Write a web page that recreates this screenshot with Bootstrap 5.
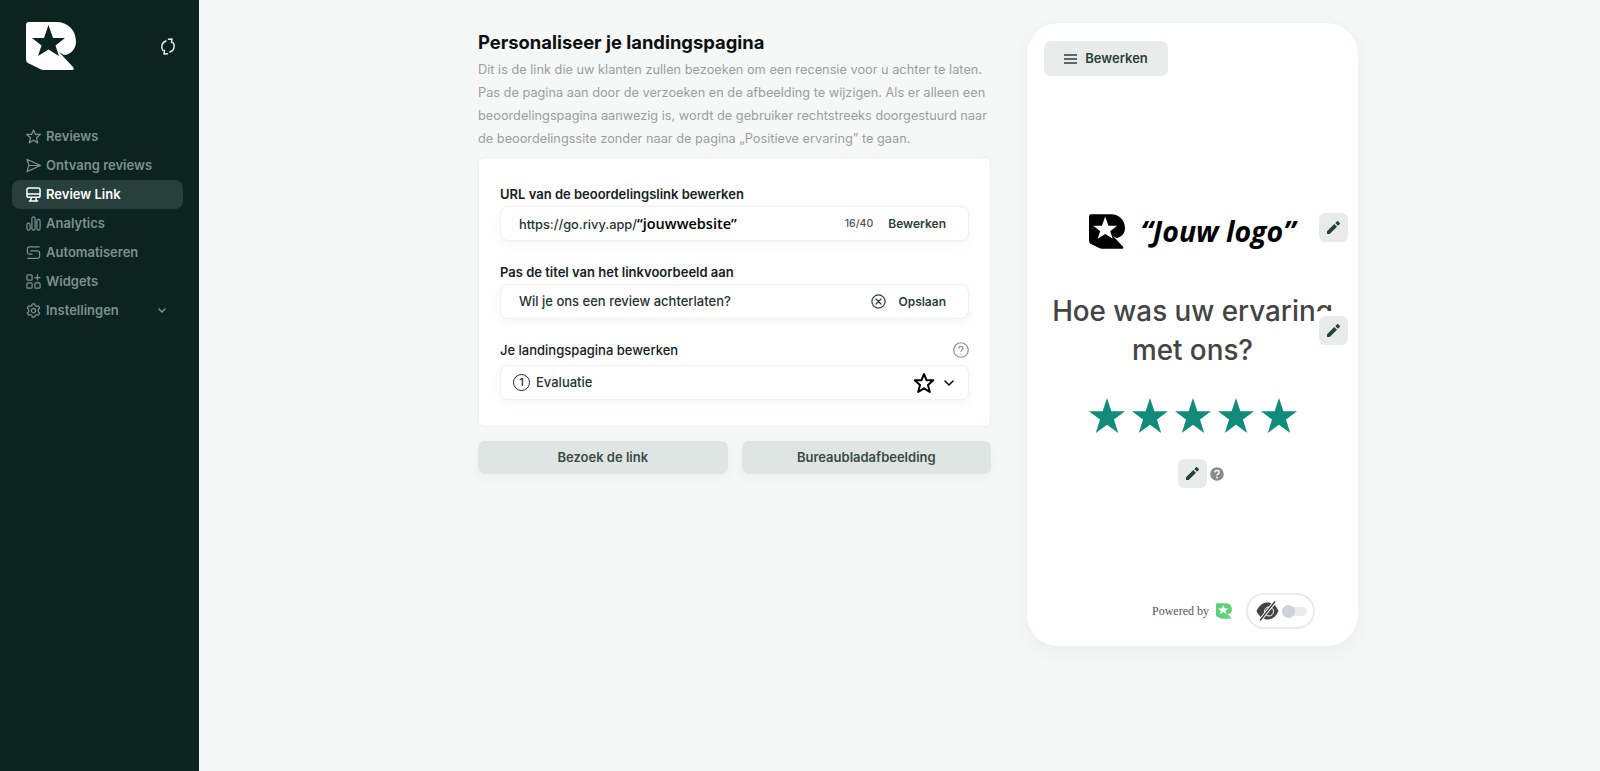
<!DOCTYPE html>
<html lang="nl">
<head>
    <meta charset="UTF-8" />
    <meta name="viewport" content="width=device-width, initial-scale=1.0"/>
    <title>Review Link</title>
    <link href="https://cdn.jsdelivr.net/npm/bootstrap@5.3.0/dist/css/bootstrap.min.css" rel="stylesheet"/>
    <style>
        body {
            background: #f6f8f7;
            font-family: "Inter", "Noto Sans", sans-serif;
            height: 771px;
            overflow: hidden;
        }

        .side-bar {
            width: 199px;
            height: 771px;
            background: #0b2420;
            flex-shrink: 0;
        }

        .side-top {
            height: 122px;
            padding: 22px 23px 0 26px;
        }

        .side-link {
            height: 29px;
            margin: 0 16px 0 12px;
            padding: 0 14px;
            border-radius: 8px;
            color: #7d908c;
            font-size: 13px;
            font-weight: 600;
            text-decoration: none;
        }

        .side-link.is-active {
            background: #27403b;
            color: #fff;
        }

        .side-link svg {
            width: 15px;
            height: 15px;
            margin-right: 5px;
            flex-shrink: 0;
        }

        .left-col {
            width: 513px;
            margin-left: 279px;
            padding-top: 31px;
        }

        .page-title {
            font-size: 18.4px;
            line-height: 22px;
            font-weight: 700;
            color: #0c0f0f;
            margin: 0 0 5px;
        }

        .page-intro {
            font-size: 12.75px;
            line-height: 23px;
            color: #9a9f9d;
            margin: 0 0 7px;
            white-space: nowrap;
        }

        .edit-card {
            background: #fff;
            border: 1px solid #eef0ef;
            border-radius: 6px;
            padding: 27px 21px 26px;
            height: 270px;
        }

        .field-label {
            font-size: 13px;
            line-height: 18px;
            font-weight: 600;
            color: #15201e;
            margin-bottom: 3px;
        }

        .field-label-last {
            font-weight: 500;
            margin-bottom: 6px;
        }

        .field-box {
            height: 35px;
            background: #fff;
            border: 1px solid #eff1f0;
            border-radius: 8px;
            box-shadow: 0 3px 10px rgba(20, 50, 45, .05);
            padding: 0 22px 0 18px;
            margin-bottom: 22px;
            font-size: 13px;
            font-weight: 500;
            color: #26322f;
        }

        .field-box-step {
            padding: 0 13px 0 12px;
            margin-bottom: 0;
        }

        .site-name {
            font-family: "Open Sans", sans-serif;
            font-size: 14.5px;
            font-weight: 600;
            color: #000;
        }

        .url-base {
            font-size: 12.8px;
        }

        .count-text {
            font-size: 10.5px;
            color: #4c5654;
            margin-right: 15px;
        }

        .box-action {
            font-size: 12px;
            font-weight: 600;
            color: #2b3f3b;
        }

        .step-num {
            width: 17px;
            height: 17px;
            border: 1.3px solid #222;
            border-radius: 50%;
            font-size: 11px;
            margin-right: 6px;
        }

        .btn-line {
            margin-top: 14px;
            gap: 14px;
        }

        .soft-btn {
            width: 50%;
            height: 33px;
            background: #dfe5e3;
            border: 0;
            border-radius: 7px;
            color: #3a4b48;
            font-size: 13px;
            font-weight: 600;
            box-shadow: 0 4px 10px rgba(20, 50, 45, .04);
        }

        .phone-box {
            position: relative;
            width: 333px;
            height: 625px;
            margin: 22px 0 0 35px;
            background: #fff;
            border: 1px solid #f0f2f1;
            border-radius: 32px;
            box-shadow: 0 6px 18px rgba(20, 50, 45, .05);
            padding: 18px 17px 17px;
        }

        .menu-btn {
            width: 124px;
            height: 35px;
            background: #e8ebea;
            border-radius: 7px;
            font-size: 13px;
            font-weight: 600;
            color: #2b3f3b;
        }

        .logo-line {
            margin-top: 137px;
            height: 37px;
            gap: 15px;
        }

        .logo-text {
            font-family: "Open Sans", sans-serif;
            font-size: 28.5px;
            line-height: 37px;
            font-weight: 700;
            font-style: italic;
            color: #000;
        }

        .phone-title {
            margin: 42px 0 0;
            font-size: 27.8px;
            line-height: 39px;
            font-weight: 500;
            color: #444;
            text-align: center;
        }

        .star-line {
            margin-top: 28px;
            gap: 7px;
        }

        .pen-btn {
            width: 29px;
            height: 29px;
            background: #e8ebea;
            border-radius: 6px;
        }

        .pen-float {
            position: absolute;
            right: 10px;
            box-shadow: -5px -5px 0 #fff;
        }

        .pen-top {
            top: 190px;
        }

        .pen-mid {
            top: 293px;
        }

        .pen-wrap {
            position: relative;
            margin-top: 26px;
        }

        .help-dot {
            position: absolute;
            left: 32px;
            top: 8px;
        }

        .powered-line {
            position: absolute;
            left: 0;
            right: 43px;
            bottom: 17px;
        }

        .powered-text {
            font-family: "Liberation Serif", serif;
            font-size: 12px;
            color: #555;
            margin-right: 7px;
        }

        .eye-pill {
            width: 69px;
            height: 36px;
            margin-left: 14px;
            border: 2px solid #e9ecec;
            border-radius: 18px;
            padding-left: 8px;
        }

        .mini-track {
            position: relative;
            width: 25px;
            height: 9px;
            margin-left: 3px;
            background: #e9ecee;
            border-radius: 5px;
        }

        .mini-knob {
            position: absolute;
            left: 0;
            top: -2px;
            width: 13px;
            height: 13px;
            background: #ced4da;
            border-radius: 50%;
        }
    </style>
</head>
<body>
<div class="d-flex">
    <nav class="side-bar">
        <div class="side-top d-flex justify-content-between">
            <svg width="50" height="48" viewBox="0 0 50 48">
                <path fill="#fff" d="M3 0H30C42 0 50 8 50 20C50 27 44 33 38 33L33 30L47 45Q49 48 46 48H18Q16 48 14 47L2 41Q0 40 0 37V3Q0 0 3 0Z"/>
                <path fill="#0b2420" d="M22.500 3L27 16H39L29.500 23.500L33 34L22.500 27.500L12 34L15.500 23.500L6 16H18Z"/>
            </svg>
            <svg class="mt-3" width="16" height="17" viewBox="0 0 16 17" fill="none" stroke="#e6ebe9" stroke-width="1.500" stroke-linecap="round" stroke-linejoin="round">
                <path d="M3 12.500C.8 9.500 1.500 4.500 6 3M13 4.500C15.200 7.500 14.500 12.500 10 14"/>
                <path d="M8.500 1.200L12 1L11.500 4.600M7.500 15.800L4 16L4.500 12.400"/>
            </svg>
        </div>
        <a class="side-link d-flex align-items-center" href="#">
            <svg viewBox="0 0 16 16" fill="none" stroke="currentColor" stroke-width="1.300" stroke-linejoin="round"><path d="M8 1L10.100 5.800H15.300L11.200 9.300L12.500 14.800L8 11.900L3.500 14.800L4.800 9.300L.7 5.800H5.900Z"/></svg>
            <span>Reviews</span>
        </a>
        <a class="side-link d-flex align-items-center" href="#">
            <svg viewBox="0 0 16 16" fill="none" stroke="currentColor" stroke-width="1.300" stroke-linejoin="round"><path d="M1 1.500L15.500 8L1 14.500L3.200 8ZM3.200 8H15.500"/></svg>
            <span>Ontvang reviews</span>
        </a>
        <a class="side-link is-active d-flex align-items-center" href="#">
            <svg viewBox="0 0 16 16" fill="none" stroke="currentColor" stroke-width="1.600" stroke-linejoin="round"><rect x="1" y="1" width="14" height="10" rx="2"/><path d="M1 7.500H15M5.500 11L5 14.800M10.500 11L11 14.800M3 14.800H13"/></svg>
            <span>Review Link</span>
        </a>
        <a class="side-link d-flex align-items-center" href="#">
            <svg viewBox="0 0 16 16" fill="none" stroke="currentColor" stroke-width="1.300"><rect x="1" y="7.500" width="3.400" height="7.500" rx="1.700"/><rect x="6.300" y="1" width="3.400" height="14" rx="1.700"/><rect x="11.600" y="3.500" width="3.400" height="11.500" rx="1.700"/></svg>
            <span>Analytics</span>
        </a>
        <a class="side-link d-flex align-items-center" href="#">
            <svg viewBox="0 0 16 16" fill="none" stroke="currentColor" stroke-width="1.300" stroke-linecap="round"><path d="M14 2H4Q1.500 2 1.500 4V7.500Q1.500 9.800 4 9.800H6.500M5 6.200H12Q14.500 6.200 14.500 8.500V12Q14.500 14.300 12 14.300H2"/></svg>
            <span>Automatiseren</span>
        </a>
        <a class="side-link d-flex align-items-center" href="#">
            <svg viewBox="0 0 16 16" fill="none" stroke="currentColor" stroke-width="1.300" stroke-linecap="round"><rect x="1" y="1" width="5.500" height="5.500" rx="1"/><rect x="1" y="9.500" width="5.500" height="5.500" rx="1"/><rect x="9.500" y="9.500" width="5.500" height="5.500" rx="1"/><path d="M12.200 1V6.500M9.500 3.800H15"/></svg>
            <span>Widgets</span>
        </a>
        <a class="side-link d-flex align-items-center" href="#">
            <svg viewBox="0 0 16 16" fill="none" stroke="currentColor" stroke-width="1.300" stroke-linejoin="round"><circle cx="8" cy="8" r="2.300"/><path d="M6.600 1H9.400L9.800 3L11.300 3.800L13.200 3L14.600 5.400L13.100 6.700V9.300L14.600 10.600L13.200 13L11.300 12.200L9.800 13L9.400 15H6.600L6.200 13L4.700 12.200L2.800 13L1.400 10.600L2.900 9.300V6.700L1.400 5.400L2.800 3L4.700 3.800L6.200 3Z"/></svg>
            <span class="flex-grow-1">Instellingen</span>
            <svg class="me-0" viewBox="0 0 15 15" fill="none" stroke="currentColor" stroke-width="1.500" stroke-linecap="round" stroke-linejoin="round"><path d="M5 6L8 9L11 6"/></svg>
        </a>
    </nav>

    <main class="d-flex align-items-start">
        <section class="left-col">
            <h1 class="page-title">Personaliseer je landingspagina</h1>
            <p class="page-intro">Dit is de link die uw klanten zullen bezoeken om een recensie voor u achter te laten.<br>Pas de pagina aan door de verzoeken en de afbeelding te wijzigen. Als er alleen een<br>beoordelingspagina aanwezig is, wordt de gebruiker rechtstreeks doorgestuurd naar<br>de beoordelingssite zonder naar de pagina „Positieve ervaring” te gaan.</p>

            <div class="edit-card">
                <div class="field-label">URL van de beoordelingslink bewerken</div>
                <div class="field-box d-flex align-items-center">
                    <span class="url-base">https://go.rivy.app/<span class="site-name">“jouwwebsite”</span></span>
                    <span class="count-text ms-auto">16/40</span>
                    <span class="box-action">Bewerken</span>
                </div>

                <div class="field-label">Pas de titel van het linkvoorbeeld aan</div>
                <div class="field-box d-flex align-items-center">
                    <span>Wil je ons een review achterlaten?</span>
                    <svg class="ms-auto me-2" width="15" height="15" viewBox="0 0 15 15" fill="none" stroke="#2b3f3b" stroke-width="1.200" stroke-linecap="round"><circle cx="7.500" cy="7.500" r="6.600"/><path d="M5 5L10 10M10 5L5 10"/></svg>
                    <span class="box-action ms-1">Opslaan</span>
                </div>

                <div class="field-label field-label-last d-flex justify-content-between align-items-center">
                    <span>Je landingspagina bewerken</span>
                    <svg width="16" height="16" viewBox="0 0 15 15" fill="none" stroke="#8c9190" stroke-width="1.100" stroke-linecap="round"><circle cx="7.500" cy="7.500" r="6.800"/><path d="M5.500 5.800C5.500 3.500 9.500 3.500 9.500 5.800C9.500 7.200 7.500 7.200 7.500 9"/><path d="M7.500 11V11.100"/></svg>
                </div>
                <div class="field-box field-box-step d-flex align-items-center">
                    <span class="step-num d-flex align-items-center justify-content-center">1</span>
                    <span>Evaluatie</span>
                    <svg class="ms-auto" width="22" height="22" viewBox="0 0 22 22" fill="none" stroke="#000" stroke-width="2" stroke-linejoin="round"><path d="M11 2L13.600 8.300H20.300L15 13L16.800 20L11 16.300L5.200 20L7 13L1.700 8.300H8.400Z"/></svg>
                    <svg class="ms-2" width="12" height="12" viewBox="0 0 12 12" fill="none" stroke="#111" stroke-width="1.600" stroke-linecap="round" stroke-linejoin="round"><path d="M2 4L6 8L10 4"/></svg>
                </div>
            </div>

            <div class="btn-line d-flex">
                <button class="soft-btn" type="button">Bezoek de link</button>
                <button class="soft-btn" type="button">Bureaubladafbeelding</button>
            </div>
        </section>

        <section class="phone-box d-flex flex-column align-items-stretch">
            <div class="menu-btn d-flex align-items-center justify-content-center gap-2">
                <svg width="13" height="10" viewBox="0 0 13 10" stroke="#2b3f3b" stroke-width="1.300"><path d="M0 1H13M0 5H13M0 9H13"/></svg>
                <span>Bewerken</span>
            </div>

            <div class="logo-line d-flex align-items-center justify-content-center">
                <svg width="36" height="35" viewBox="0 0 50 48">
                    <path fill="#000" d="M3 0H30C42 0 50 8 50 20C50 27 44 33 38 33L33 30L47 45Q49 48 46 48H18Q16 48 14 47L2 41Q0 40 0 37V3Q0 0 3 0Z"/>
                    <path fill="#fff" d="M22.500 3L27 16H39L29.500 23.500L33 34L22.500 27.500L12 34L15.500 23.500L6 16H18Z"/>
                </svg>
                <span class="logo-text">“Jouw logo”</span>
            </div>

            <h2 class="phone-title">Hoe was uw ervaring<br>met ons?</h2>

            <div class="star-line d-flex justify-content-center">
                <svg width="36" height="35" viewBox="0 0 36 35" fill="#118b7a"><path d="M18 0L22.400 13.300H36L25 21.500L29.200 35L18 26.700L6.800 35L11 21.500L0 13.300H13.600Z"/></svg>
                <svg width="36" height="35" viewBox="0 0 36 35" fill="#118b7a"><path d="M18 0L22.400 13.300H36L25 21.500L29.200 35L18 26.700L6.800 35L11 21.500L0 13.300H13.600Z"/></svg>
                <svg width="36" height="35" viewBox="0 0 36 35" fill="#118b7a"><path d="M18 0L22.400 13.300H36L25 21.500L29.200 35L18 26.700L6.800 35L11 21.500L0 13.300H13.600Z"/></svg>
                <svg width="36" height="35" viewBox="0 0 36 35" fill="#118b7a"><path d="M18 0L22.400 13.300H36L25 21.500L29.200 35L18 26.700L6.800 35L11 21.500L0 13.300H13.600Z"/></svg>
                <svg width="36" height="35" viewBox="0 0 36 35" fill="#118b7a"><path d="M18 0L22.400 13.300H36L25 21.500L29.200 35L18 26.700L6.800 35L11 21.500L0 13.300H13.600Z"/></svg>
            </div>

            <div class="pen-wrap align-self-center">
                <div class="pen-btn d-flex align-items-center justify-content-center">
                    <svg width="13" height="13" viewBox="0 0 13 13" fill="#24423c"><path d="M0 10.300V13H2.700L10 5.700L7.300 3ZM12.800 2.900C13.100 2.600 13.100 2.200 12.800 1.900L11.100 .2C10.800 -.1 10.400 -.1 10.100 .2L8.300 2L11 4.700Z"/></svg>
                </div>
                <svg class="help-dot" width="14" height="14" viewBox="0 0 14 14"><circle cx="7" cy="7" r="6.800" fill="#8a8a8a"/><path d="M4.800 5.400C4.800 2.900 9.200 2.900 9.200 5.400C9.200 6.900 7 6.800 7 8.400" fill="none" stroke="#fff" stroke-width="1.400"/><circle cx="7" cy="10.500" r=".9" fill="#fff"/></svg>
            </div>

            <div class="pen-btn pen-float pen-top d-flex align-items-center justify-content-center">
                <svg width="13" height="13" viewBox="0 0 13 13" fill="#24423c"><path d="M0 10.300V13H2.700L10 5.700L7.300 3ZM12.800 2.900C13.100 2.600 13.100 2.200 12.800 1.900L11.100 .2C10.800 -.1 10.400 -.1 10.100 .2L8.300 2L11 4.700Z"/></svg>
            </div>
            <div class="pen-btn pen-float pen-mid d-flex align-items-center justify-content-center">
                <svg width="13" height="13" viewBox="0 0 13 13" fill="#24423c"><path d="M0 10.300V13H2.700L10 5.700L7.300 3ZM12.800 2.900C13.100 2.600 13.100 2.200 12.800 1.900L11.100 .2C10.800 -.1 10.400 -.1 10.100 .2L8.300 2L11 4.700Z"/></svg>
            </div>

            <div class="powered-line d-flex align-items-center justify-content-end">
                <span class="powered-text">Powered by</span>
                <svg width="16" height="16" viewBox="0 0 50 48">
                    <path fill="#5fd17a" d="M3 0H30C42 0 50 8 50 20C50 27 44 33 38 33L33 30L47 45Q49 48 46 48H18Q16 48 14 47L2 41Q0 40 0 37V3Q0 0 3 0Z"/>
                    <path fill="#fff" d="M22.500 5L27 16H39L29.500 23.500L33 34L22.500 27.500L12 34L15.500 23.500L6 16H18Z"/>
                </svg>
                <div class="eye-pill d-flex align-items-center">
                    <svg width="23" height="22" viewBox="0 0 23 22">
                        <path fill="#444" d="M.5 11C3 5 7.500 2.500 11.500 2.500C15.500 2.500 20 5 22.500 11C20 17 15.500 19.500 11.500 19.500C7.500 19.500 3 17 .5 11Z"/>
                        <circle cx="13" cy="11.500" r="4.500" fill="none" stroke="#fff" stroke-width="1"/>
                        <path d="M4 20.500L19 1.500" stroke="#fff" stroke-width="3.500"/>
                        <path d="M4 20.500L19 1.500" stroke="#444" stroke-width="1.500"/>
                    </svg>
                    <div class="mini-track"><div class="mini-knob"></div></div>
                </div>
            </div>
        </section>
    </main>
</div>
<script src="https://cdn.jsdelivr.net/npm/bootstrap@5.3.0/dist/js/bootstrap.bundle.min.js"></script>
</body>
</html>
